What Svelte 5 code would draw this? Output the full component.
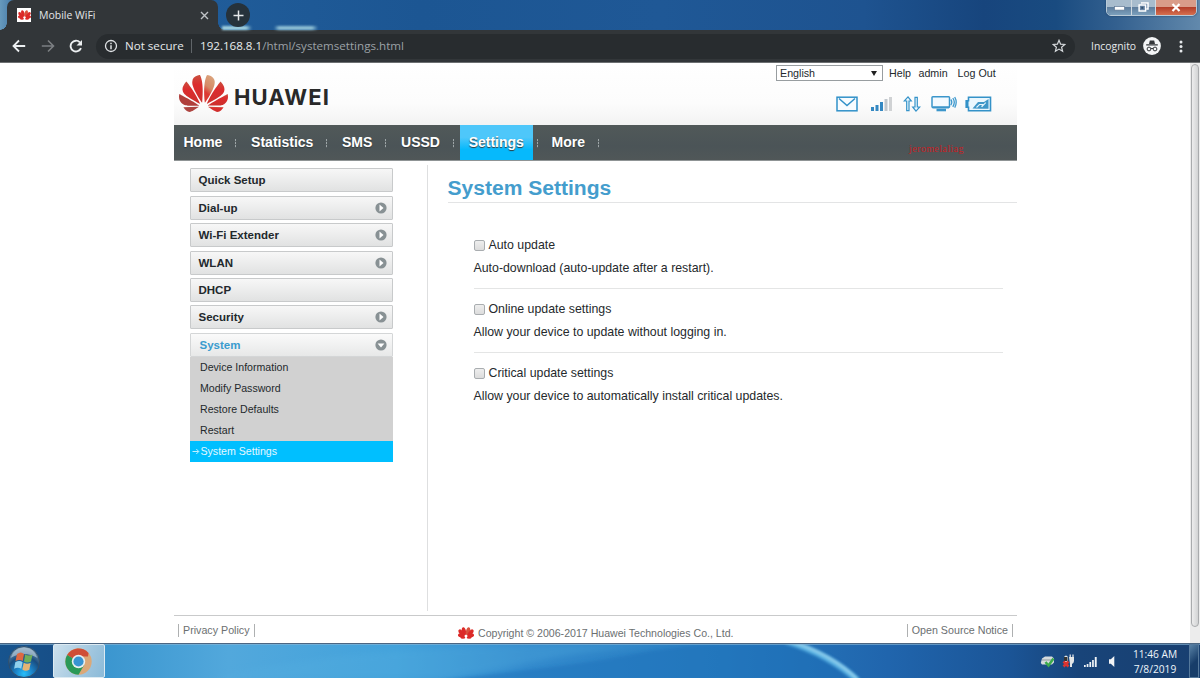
<script>
  const before = ['Home', 'Statistics', 'SMS', 'USSD'];
  const menu = [
    { name: 'Quick Setup', arrow: false },
    { name: 'Dial-up', arrow: true },
    { name: 'Wi-Fi Extender', arrow: true },
    { name: 'WLAN', arrow: true },
    { name: 'DHCP', arrow: false },
    { name: 'Security', arrow: true }
  ];
  const sub = ['Device Information', 'Modify Password', 'Restore Defaults', 'Restart'];
  const options = [
    { title: 'Auto update', text: 'Auto-download (auto-update after a restart).' },
    { title: 'Online update settings', text: 'Allow your device to update without logging in.' },
    { title: 'Critical update settings', text: 'Allow your device to automatically install critical updates.' }
  ];
</script>

{#snippet flower()}
  <svg class="flower" viewBox="0 2.9 24 18.2" preserveAspectRatio="none">
    <defs>
      <linearGradient id="petal" x1="0" y1="0" x2="0" y2="1">
        <stop offset="0" stop-color="#c9503f" /><stop offset=".35" stop-color="#dc2c2e" /><stop offset="1" stop-color="#cc302d" />
      </linearGradient>
      <linearGradient id="petalLight" x1="0.6" y1="0" x2="0.3" y2="1">
        <stop offset="0" stop-color="#dba37c" /><stop offset=".45" stop-color="#d58a66" /><stop offset=".7" stop-color="#dc3a33" />
      </linearGradient>
    </defs>
    <g fill="url(#petal)">
      <path d="M3.67 6.14S1.82 7.91 1.72 9.78v.35c.08 1.51 1.22 2.4 1.22 2.4 1.83 1.79 6.26 4.04 7.3 4.55 0 0 .06.03.1-.01l.02-.04v-.04C7.52 10.8 3.67 6.14 3.67 6.14z" />
      <path d="M9.65 18.6c-.02-.08-.1-.08-.1-.08l-7.38.26c.8 1.43 2.15 2.53 3.56 2.2.96-.25 3.16-1.78 3.88-2.3.06-.05.04-.08.04-.08z" fill="#ae4541" />
      <path d="M9.73 17.82C6.49 15.63.21 12.28.21 12.28c-.15.46-.2.9-.21 1.3v.07c0 1.07.4 1.82.4 1.82.8 1.69 2.34 2.2 2.34 2.2.7.3 1.4.31 1.4.31.12.02 4.4 0 5.54 0 .05 0 .08-.05.08-.05z" fill="#b03f3b" />
      <path d="M9.06 3.19a3.42 3.42 0 0 0-2.57 3.15v.41c.03.6.16 1.05.16 1.05.66 2.9 3.86 7.65 4.55 8.65.05.05.1.03.1.03a.1.1 0 0 0 .06-.1c1.06-10.6-1.11-13.42-1.11-13.42-.32.02-1.19.23-1.19.23z" />
      <path d="M17.36 5.46s-.49-1.8-2.44-2.28c0 0-.57-.14-1.17-.22 0 0-2.18 2.81-1.12 13.43.01.07.06.08.06.08.07.03.1-.03.1-.03.72-1.03 3.9-5.76 4.55-8.64 0 0 .36-1.4.02-2.34z" fill="url(#petalLight)" />
      <path d="M14.44 18.53s-.07 0-.09.05c0 0-.01.07.03.1.7.51 2.85 2 3.88 2.3 0 0 .16.05.43.06h.14c.69-.02 1.9-.37 3-2.26z" />
      <path d="M22.27 10.12c.14-2.06-1.94-3.97-1.94-3.98 0 0-3.85 4.66-6.67 10.8 0 0-.03.08.02.13h.1c1.06-.53 5.46-2.77 7.28-4.54 0 0 1.15-.93 1.21-2.41z" />
      <path d="M23.79 12.26s-6.28 3.37-9.52 5.55c0 0-.05.04-.03.11 0 0 .03.06.07.06 1.16 0 5.56 0 5.67-.02 0 0 .57-.02 1.27-.29 0 0 1.56-.5 2.37-2.27 0 0 .73-1.45.17-3.14z" />
    </g>
  </svg>
{/snippet}

{#snippet smallFlower()}
  <svg class="flower" viewBox="0 0 16 12" preserveAspectRatio="none">
    <g fill="#dc2a28">
      <ellipse cx="6" cy="4.200" rx="2" ry="4.100" transform="rotate(-14 6 4.200)" />
      <ellipse cx="10" cy="4.200" rx="2" ry="4.100" transform="rotate(14 10 4.200)" fill="#d9513c" />
      <ellipse cx="3.500" cy="6" rx="2" ry="4.200" transform="rotate(-38 3.500 6)" />
      <ellipse cx="12.500" cy="6" rx="2" ry="4.200" transform="rotate(38 12.500 6)" />
      <ellipse cx="3.200" cy="8.600" rx="3.300" ry="1.900" transform="rotate(14 3.200 8.600)" />
      <ellipse cx="12.800" cy="8.600" rx="3.300" ry="1.900" transform="rotate(-14 12.800 8.600)" />
      <ellipse cx="4.900" cy="10.500" rx="2.400" ry="1.300" />
      <ellipse cx="11.100" cy="10.500" rx="2.400" ry="1.300" />
    </g>
  </svg>
{/snippet}

<div class="desktop">
  <header class="tabstrip">
    <div class="tab">
      <span class="favicon">{@render smallFlower()}</span>
      <span class="tab-title">Mobile WiFi</span>
      <svg class="tab-close" width="9" height="9" viewBox="0 0 9 9"><path d="M1 1l7 7M8 1l-7 7" stroke="#bfc3c7" stroke-width="1.4" /></svg>
    </div>
    <div class="newtab"><svg width="11" height="11" viewBox="0 0 11 11"><path d="M5.5 .5v10M.5 5.500h10" stroke="#e4e8ea" stroke-width="1.5" /></svg></div>
    <div class="glow"></div>
    <div class="winbtns">
      <span class="wb min"><svg width="11" height="5" viewBox="0 0 11 5"><rect x=".5" y=".5" width="10" height="3.600" fill="#fff" stroke="#637a96" stroke-width=".7" /></svg></span>
      <span class="wb max"><svg width="11" height="10" viewBox="0 0 11 10"><path d="M3 .9h7v6H8.500M1.100 3h6.500v6H1.100z" fill="#6985a5" stroke="#fff" stroke-width="1.500" /><rect x="3.300" y="4.800" width="2" height="2" fill="#31516f" /></svg></span>
      <span class="wb close"><svg width="10" height="9" viewBox="0 0 10 9"><path d="M1.500 1l7 7M8.500 1l-7 7" stroke="#fff" stroke-width="2.200" /></svg></span>
    </div>
  </header>

  <div class="toolbar">
    <svg class="ic back" width="14" height="14" viewBox="0 0 14 14"><path d="M13.200 7H1.800M7 1.500L1.500 7 7 12.500" fill="none" stroke="#eceff1" stroke-width="1.800" /></svg>
    <svg class="ic fwd" width="14" height="14" viewBox="0 0 14 14"><path d="M.8 7h11.400M7 1.500L12.500 7 7 12.500" fill="none" stroke="#7b7f82" stroke-width="1.600" /></svg>
    <svg class="ic reload" width="14" height="14" viewBox="0 0 14 14"><path d="M12 9.200A5.400 5.400 0 1 1 10.900 3.300" fill="none" stroke="#eceff1" stroke-width="1.900" /><path d="M13 .9v5.500H7.500z" fill="#eceff1" /></svg>
    <div class="omnibox">
      <svg width="14" height="14" viewBox="0 0 14 14"><circle cx="7" cy="7" r="5.500" fill="none" stroke="#dfe2e5" stroke-width="1.300" /><path d="M7 6.200v4M7 3.700v1.500" stroke="#dfe2e5" stroke-width="1.500" /></svg>
      <span class="notsecure">Not secure</span>
      <i class="bar"></i>
      <span class="url"><b>192.168.8.1</b>/html/systemsettings.html</span>
      <svg class="star" width="14" height="14" viewBox="0 0 14 14"><path d="M7 1.300l1.600 3.900 4.200.3-3.200 2.700 1 4.100L7 10.100l-3.600 2.200 1-4.100L1.200 5.500l4.200-.3z" fill="none" stroke="#d5d9dc" stroke-width="1.200" /></svg>
    </div>
    <span class="incog">Incognito</span>
    <svg class="spy" width="18" height="18" viewBox="0 0 18 18"><circle cx="9" cy="9" r="8.900" fill="#f3f5f6" /><path d="M6 7l.8-3.500h4.400L12 7zM3.200 7.300h11.600v1.100H3.200z" fill="#33373a" /><g fill="none" stroke="#33373a" stroke-width="1"><circle cx="6" cy="12" r="1.900" /><circle cx="12" cy="12" r="1.900" /><path d="M7.900 11.600q1.100-.5 2.200 0" /></g></svg>
    <svg class="dots" width="4" height="13" viewBox="0 0 4 13"><g fill="#e6e9eb"><circle cx="2" cy="1.900" r="1.500" /><circle cx="2" cy="6.500" r="1.500" /><circle cx="2" cy="11.100" r="1.500" /></g></svg>
  </div>

  <div class="viewport">
    <div class="page">
      <div class="head">
        <div class="brand"><span class="logo">{@render flower()}</span><span class="brandname">HUAWEI</span></div>
        <div class="tools">
          <div class="links">
            <div class="select"><span>English</span><i></i></div>
            <span class="help">Help</span><span class="admin">admin</span><span>Log Out</span>
          </div>
          <div class="status">
            <svg width="22" height="16" viewBox="0 0 22 16"><rect x="1" y="1.200" width="20" height="13.600" fill="#f8fcff" stroke="#3191c9" stroke-width="1.500" /><path d="M3 2.500l8 7L19 2.500" fill="none" stroke="#3191c9" stroke-width="1.500" /></svg>
            <svg class="sig" width="23" height="16" viewBox="0 0 23 16"><g fill="#3488c2"><rect x="1" y="11" width="3" height="4" /><rect x="5.500" y="9" width="3" height="6" /><rect x="10" y="6" width="3" height="9" /></g><rect x="14.500" y="3" width="3" height="12" fill="#c1c7cd" /><rect x="19" y="1" width="3" height="14" fill="#d0d2d4" /></svg>
            <svg class="updown" width="18" height="16" viewBox="0 0 18 16"><path d="M5 .9L8.300 5H6v9.700H3.700V5H1.200zM13 15.100L9.700 11H12V1.300h2.300V11h2.500z" fill="#eef9ff" stroke="#3593c9" stroke-width="1.200" /></svg>
            <svg class="mon" width="26" height="17" viewBox="0 0 26 17"><rect x="1" y="1.700" width="17.500" height="10.700" rx=".8" fill="#f3faff" stroke="#3b96cb" stroke-width="1.500" /><path d="M1.500 12.300h16.500" stroke="#3b96cb" stroke-width="2" /><path d="M5.500 15h9.500" stroke="#3b96cb" stroke-width="2.600" /><path d="M19.800 4.500q2 2.700 0 5.600M21.800 3q3 4.300 0 8.800M23.700 2q3 5.200 0 10.600" fill="none" stroke="#3d98cd" stroke-width="1.300" /></svg>
            <svg class="bat" width="27" height="16" viewBox="0 0 27 16"><path d="M3.500 1.200h22v13.500h-22v-3.500H1.200V4.800h2.300z" fill="#eaf7fe" stroke="#3492c8" stroke-width="1.600" /><path d="M1 4.500h2.500v7H1z" fill="#3492c8" /><path d="M7.500 12.500L13 6h6L23.500 3v9.800h-8z" fill="#3f97c8" /><path d="M11.500 11.500l3-3h3.200l-1 2.500 4-4.300" fill="none" stroke="#e3f4fc" stroke-width="1.100" /></svg>
          </div>
        </div>
      </div>

      <nav>
        {#each before as n}<span class="navitem">{n}</span><i class="navsep"></i>{/each}
        <span class="navitem current">Settings</span><i class="navsep after"></i>
        <span class="navitem">More</span><i class="navsep last"></i>
        <span class="mark">jeromelaliag</span>
      </nav>

      <div class="body">
        <aside>
          {#each menu as m}
            <div class="item"><span>{m.name}</span>
              {#if m.arrow}<svg width="12" height="12" viewBox="0 0 12 12"><circle cx="6" cy="6" r="5.600" fill="#889194" /><path d="M4.500 2.600l4 3.400-4 3.400z" fill="#fff" /></svg>{/if}
            </div>
          {/each}
          <div class="item open"><span>System</span><svg width="12" height="12" viewBox="0 0 12 12"><circle cx="6" cy="6" r="5.600" fill="#889194" /><path d="M2.600 4.500l3.400 4 3.400-4z" fill="#fff" /></svg></div>
          <div class="sub">
            {#each sub as s}<div>{s}</div>{/each}
            <div class="selected"><svg width="8" height="7" viewBox="0 0 8 7"><path d="M.5 3.500h6M4.300 1l2.500 2.500L4.300 6" fill="none" stroke="#d9f5ff" stroke-width=".9" /></svg>System Settings</div>
          </div>
        </aside>
        <main>
          <h1>System Settings</h1>
          <div class="options">
            {#each options as o}
              <section>
                <label><input type="checkbox" /><span>{o.title}</span></label>
                <p>{o.text}</p>
              </section>
            {/each}
          </div>
        </main>
      </div>

      <footer>
        <span class="fl left">Privacy Policy</span>
        <span class="copy"><span class="mini">{@render smallFlower()}</span>Copyright © 2006-2017 Huawei Technologies Co., Ltd.</span>
        <span class="fl">Open Source Notice</span>
      </footer>
    </div>
    <div class="scroll"><div class="thumb"></div></div>
  </div>

  <div class="taskbar">
    <svg class="swirl" width="1200" height="35" viewBox="0 0 1200 35" preserveAspectRatio="none">
      <defs>
        <linearGradient id="tb" x1="0" x2="1" y1="0" y2="0">
          <stop offset="0" stop-color="#17548e" /><stop offset=".043" stop-color="#174f88" /><stop offset=".088" stop-color="#3b96cf" /><stop offset=".19" stop-color="#52a8dc" /><stop offset=".33" stop-color="#43a2db" /><stop offset=".44" stop-color="#3289cc" /><stop offset=".6" stop-color="#287cc0" /><stop offset=".74" stop-color="#2065ad" /><stop offset=".84" stop-color="#1b5597" /><stop offset=".9" stop-color="#184479" /><stop offset="1" stop-color="#183f70" />
        </linearGradient>
        <filter id="soft" x="-20%" y="-50%" width="140%" height="200%"><feGaussianBlur stdDeviation="1.600" /></filter>
        <filter id="haze" x="-20%" y="-50%" width="140%" height="200%"><feGaussianBlur stdDeviation="3" /></filter>
      </defs>
      <rect width="1200" height="35" fill="url(#tb)" />
      <path d="M210 35Q350 2 570 1H690Q600 5 540 18T440 35z" fill="#55afe0" opacity=".3" filter="url(#haze)" />
      <path d="M440 37Q580 22 640 10T790 1Q840 10 860 37z" fill="#1e70b9" opacity=".45" filter="url(#soft)" />
      <path d="M786 -2Q830 12 858 38" fill="none" stroke="#67c2ee" stroke-width="6" opacity=".8" filter="url(#soft)" />
      <path d="M790 -2Q833 12 857 36" fill="none" stroke="#a7dcf2" stroke-width="2" filter="url(#soft)" />
      <path d="M0 .5h1200" stroke="#4c6682" /><path d="M0 1.500h1200" stroke="#85b4d5" opacity=".65" />
    </svg>
    <div class="taskrow">
      <svg class="start" width="34" height="32" viewBox="0 0 34 32">
        <defs><radialGradient id="orb" cx=".5" cy=".88" r=".9"><stop offset="0" stop-color="#27bffa" /><stop offset=".3" stop-color="#1c83c8" /><stop offset=".6" stop-color="#194d80" /><stop offset="1" stop-color="#8ba8bc" /></radialGradient></defs>
        <circle cx="17" cy="16" r="15.500" fill="url(#orb)" stroke="#31506c" />
        <path d="M3.500 12Q7 1.500 17 1.500T30.500 12Q17 4 3.500 12z" fill="#c3d4df" opacity=".6" />
        <path d="M10 8q4-3 7 0l-1.200 7q-3.300-2-7.300 0z" fill="#de6942" /><path d="M18 8.500q4 2 7.500 0L24 15.600q-4 2-7-.1z" fill="#70ae58" /><path d="M8.300 16.200q4-2.200 7.300 0l-1.300 6.500q-3.500-2-7.200 0z" fill="#8fd0ed" /><path d="M16.700 16.700q3.500 2 7 0l-1.400 7q-3.700 2-7-.3z" fill="#e5b473" />
      </svg>
      <div class="task">
        <svg width="27" height="27" viewBox="0 0 27 27"><circle cx="13.500" cy="13.500" r="13.200" fill="#dba878" /><path d="M13.500 13.500L2.100 6.900A13.200 13.200 0 0 1 23.500 5L23 8.500H13.500z" fill="#cf4e37" /><path d="M13.500 13.500L2.100 6.900A13.200 13.200 0 0 0 13.500 26.700L19.300 16.800z" fill="#2a9958" /><circle cx="13.500" cy="13.500" r="6.700" fill="#e8eef0" /><circle cx="13.500" cy="13.500" r="5.100" fill="#3894d2" /></svg>
      </div>
      <div class="tray">
        <svg width="15" height="13" viewBox="0 0 15 13"><path d="M2 3.500L5 1.500h7l2 2v4l-2 2H2L.8 8z" fill="#d6dbdd" /><path d="M2 5h11" stroke="#8f999d" /><path d="M5.500 7l3 3.500 5-7" fill="none" stroke="#3caa4c" stroke-width="2.500" /></svg>
        <svg class="power" width="14" height="15" viewBox="0 0 14 15"><path d="M2 3q2-3 4 0v5H2zM7 3h5v4q0 2-2 3v3H8v-3z" fill="#e2e5e6" /><path d="M8.200 .5v3M11 .5v3" stroke="#eee" stroke-width="1.200" /><path d="M2 3h3.500v4H2z" fill="#333" /><path d="M1.500 7.500l5 5M6.500 7.500l-5 5" stroke="#dc3430" stroke-width="2.600" /></svg>
        <svg class="net" width="15" height="12" viewBox="0 0 15 12"><g fill="#f0f4f7"><rect x="1" y="9" width="1.700" height="2" /><rect x="3.700" y="8" width="1.700" height="3" /><rect x="6.400" y="6" width="1.700" height="5" /><rect x="9.100" y="4" width="1.700" height="7" /><rect x="11.800" y="1" width="1.900" height="10" /></g></svg>
        <svg class="vol" width="8" height="13" viewBox="0 0 8 13"><path d="M1 4.300h1.800L6.300 1v11L2.800 8.700H1z" fill="#f2f4f6" /></svg>
      </div>
      <div class="clock"><span>11:46 AM</span><span>7/8/2019</span></div>
      <div class="peek"></div>
    </div>
  </div>
</div>

<style>
  :global(body) { margin: 0; background: #fff; overflow: hidden; }
  .desktop { width: 1200px; height: 678px; display: flex; flex-direction: column; overflow: hidden; font-family: "Liberation Sans", Arial, sans-serif; background: #fff; }
  svg { display: block; flex: none; }
  .flower { width: 100%; height: 100%; }

  .tabstrip { height: 30px; flex: none; display: flex; position: relative; background: linear-gradient(90deg, #679abd 0, #477ca9 1%, #205c99 17%, #1c5693 35%, #1f5896 55%, #1e5390 72%, #17457d 82%, #194b80 88%, #33608f 93%, #6289ac 100%); font-family: "Open Sans", "Noto Sans", sans-serif; }
  .tab { margin-left: 7px; width: 211px; box-sizing: border-box; background: #323639; border-radius: 7px 7px 0 0; display: flex; align-items: center; padding: 0 9px 0 10px; position: relative; }
  .tab::before, .tab::after { content: ""; position: absolute; bottom: 0; width: 7px; height: 7px; }
  .tab::before { left: -7px; background: radial-gradient(circle at 0 0, transparent 6.500px, #323639 7px); }
  .tab::after { right: -7px; background: radial-gradient(circle at 100% 0, transparent 6.500px, #323639 7px); }
  .favicon { width: 13px; height: 10px; padding: 2px .5px; background: #fff; margin-right: 8px; }
  .tab-title { color: #e2e5e7; font-size: 10.500px; flex: 1; line-height: 30px; }
  .newtab { width: 24px; height: 24px; border-radius: 50%; background: #26323b; margin: 3px 0 0 8px; display: flex; align-items: center; justify-content: center; z-index: 1; }
  .glow { position: absolute; left: 222px; top: 26px; width: 101px; height: 4px; background: linear-gradient(90deg, #a2d1df 0 24px, transparent 30px 52px, #8fc0d5 57px 90px, transparent 96px); filter: blur(1px); }
  .winbtns { position: absolute; right: 3px; top: -2px; height: 18px; display: flex; border: 1px solid #b9cad7; border-radius: 0 0 5px 5px; overflow: hidden; box-shadow: 0 0 2px #17395f; box-sizing: border-box; }
  .wb { display: flex; align-items: center; justify-content: center; background: linear-gradient(#a8bccd 48%, #5e7d9d 52%, #7ca0bc); border-right: 1px solid #d1dae1; }
  .min { width: 24px; padding-top: 3px; } .max { width: 23px; }
  .close { width: 40px; border: 0; background: linear-gradient(#d99c89 48%, #b33e29 52%, #d6704f); }

  .toolbar { height: 33px; flex: none; box-sizing: border-box; background: #323639; border-bottom: 1px solid #6d7072; display: flex; align-items: center; padding: 0 17px 0 12px; font-family: "Open Sans", "Noto Sans", sans-serif; font-size: 11px; color: #e6e9eb; }
  .fwd { margin-left: 15px; } .reload { margin-left: 14px; }
  .omnibox { margin-left: 13px; width: 979px; height: 25px; box-sizing: border-box; border-radius: 13px; background: #282c2f; display: flex; align-items: center; padding: 0 9px 0 8px; }
  .notsecure { margin-left: 7px; font-size: 11.600px; line-height: 14px; margin-top: -1px; width: 60px; white-space: nowrap; }
  .bar { width: 1px; height: 14px; background: #606569; margin: 0 8px 0 6px; }
  .url { flex: 1; color: #9ba1a6; font-size: 11.600px; line-height: 14px; margin-top: -1px; } .url b { font-weight: 400; color: #e9ecee; }
  .incog { margin-left: 16px; width: 46px; font-size: 10.400px; white-space: nowrap; }
  .spy { margin-left: 6px; } .dots { margin-left: auto; }

  .viewport { height: 580px; flex: none; display: flex; box-sizing: border-box; background: #fff; }
  .page { width: 843px; margin-left: 174px; display: flex; flex-direction: column; }
  .head { height: 62px; display: flex; justify-content: space-between; background: linear-gradient(#fff, #fcfcfc 65%, #f3f3f3); }
  .brand { display: flex; padding: 12px 0 0 5px; align-items: flex-start; }
  .logo { width: 49px; height: 37px; }
  .brandname { font: 700 22px/26px Inter, sans-serif; letter-spacing: 1.100px; color: #292929; margin: 9px 0 0 6px; }
  .tools { width: 241px; }
  .links { display: flex; align-items: center; font-size: 10.700px; color: #23292d; height: 16px; margin-top: 2px; }
  .select { width: 107px; height: 16px; border: 1px solid #989da0; box-sizing: border-box; background: #fff; display: flex; align-items: center; justify-content: space-between; padding: 0 5px 0 3px; }
  .select i { border: 3px solid transparent; border-top: 5px solid #202020; border-bottom: 0; }
  .help { margin-left: 6px; } .admin { margin: 0 10px 0 7.500px; }
  .status { display: flex; align-items: center; margin: 14px 0 0 60px; height: 17px; }
  .sig { margin-left: 12px; } .updown { margin-left: 10px; } .mon { margin-left: 10px; } .bat { margin-left: 8px; }

  nav { height: 36px; flex: none; background: linear-gradient(#515959, #4b5457 60%, #505758); border-bottom: 1px solid #8f9495; box-sizing: border-box; display: flex; align-items: center; padding-left: 9.500px; color: #fff; font-weight: 700; font-size: 14px; position: relative; }
  .navitem { line-height: 35px; text-shadow: 0 1px 1px #30383a; }
  .navsep { width: 1px; height: 9px; margin: 2px 14.700px 0 13px; background: repeating-linear-gradient(#9da5a7 0 2px, #5b6365 2px 3px); }
  .current { height: 35px; align-self: flex-start; padding: 0 9px; margin: 0 -9px; background: linear-gradient(#4ec7fa 0 35%, #06b9fc 70%); }
  .after { margin-right: 13.700px; }
  .mark { position: absolute; left: 735px; top: 17px; font: 400 10px/14px "Liberation Serif", serif; color: #c52125; letter-spacing: .400px; }

  .body { display: flex; height: 454px; }
  aside { width: 203px; padding: 7.400px 34px 0 15.500px; flex: none; }
  .item { height: 24px; margin-bottom: 3.400px; box-sizing: border-box; border: 1px solid #c8cacb; background: linear-gradient(#f7f7f7, #e1e2e2); border-radius: 1px; display: flex; align-items: center; justify-content: space-between; padding: 0 5px 0 8px; font-weight: 700; font-size: 11.500px; color: #22282c; }
  .item span { line-height: 22px; }
  .open { margin-bottom: 0; background: linear-gradient(#fafafa, #e7e8e8); color: #3a9bce; border-color: #d4d6d7; padding-left: 9px; }
  .sub { background: #d1d1d1; }
  .sub div { height: 21.200px; line-height: 21px; padding-left: 10.500px; font-size: 10.600px; color: #24292c; }
  .sub .selected { background: #00bfff; color: #e4f8ff; display: flex; align-items: center; padding-left: 2px; gap: 1px; height: 21px; }
  main { border-left: 1px solid #dedfe0; margin-top: 4px; height: 446px; padding-left: 20px; width: 569px; }
  h1 { margin: 0; height: 37px; line-height: 45px; font-size: 21.050px; color: #449dcd; border-bottom: 1px solid #e3e4e5; white-space: nowrap; }
  .options { padding: 33px 14px 0 26px; }
  section { height: 64.300px; box-sizing: border-box; border-bottom: 1px solid #e4e5e5; margin: 0; color: #25292c; font-size: 12.350px; }
  section:first-child { height: 53px; }
  section:not(:first-child) { padding-top: 11px; }
  section:last-child { border: 0; }
  label { display: flex; height: 18px; align-items: center; gap: 4px; }
  input { appearance: none; width: 11px; height: 11px; margin: 1px 0 0; border: 1px solid #a9adb0; border-radius: 2px; background: linear-gradient(#eee, #dcdcdc); box-sizing: border-box; }
  p { margin: 5px 0 0; line-height: 18px; white-space: nowrap; }

  footer { border-top: 1px solid #c9cacb; height: 27px; box-sizing: border-box; display: flex; align-items: flex-start; padding: 0 4px; font-size: 10.700px; color: #6b6f71; }
  .fl { margin-top: 8px; height: 13px; line-height: 13px; border: solid #aeb0b1; border-width: 0 1px; padding: 0 4px; white-space: nowrap; margin-left: auto; }
  .left { margin-left: 0; width: 67px; }
  .copy { display: flex; align-items: center; margin: 9px 0 0 203px; height: 15px; font-size: 10.600px; white-space: nowrap; }
  .mini { width: 16px; height: 12px; margin-right: 4px; }
  .scroll { width: 10px; margin-left: auto; background: #ececec; display: flex; justify-content: center; }
  .thumb { height: 563px; width: 8px; box-sizing: border-box; border: 1px solid #a9abad; border-radius: 4px; background: linear-gradient(90deg, #ededed, #d2d3d4); margin-top: 1px; }

  .taskbar { height: 35px; flex: none; position: relative; }
  .swirl { position: absolute; inset: 0; }
  .taskrow { position: relative; display: flex; height: 35px; align-items: center; }
  .start { margin: 3px 0 0 7px; }
  .task { margin: 1px 0 0 12px; width: 52px; height: 34px; box-sizing: border-box; border: 1px solid #dceaf2; border-radius: 2px; display: flex; align-items: center; justify-content: center; background: linear-gradient(115deg, #cce0ed, #a2c7df 60%, #8bbad8); }
  .task svg { margin-right: 2px; }
  .tray { display: flex; align-items: center; margin: 2px 0 0 auto; }
  .power { margin-left: 7px; } .net { margin-left: 7px; } .vol { margin-left: 10px; }
  .clock { font: 10.200px/14.500px "Open Sans", sans-serif; color: #eef5fa; display: flex; flex-direction: column; align-items: center; width: 48px; margin: 2px 1px 0 15px; white-space: nowrap; }
  .peek { width: 10px; height: 34px; box-sizing: border-box; border: 1px solid #55799c; margin: 1px 1px 0 9px; background: linear-gradient(135deg, #5881a5, #173d69 55%); }
</style>
